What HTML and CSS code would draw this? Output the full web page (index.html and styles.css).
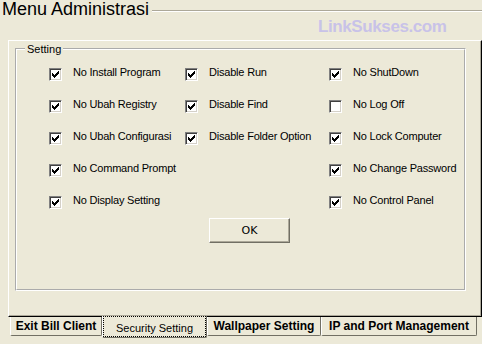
FILE: index.html
```html
<!DOCTYPE html>
<html lang="id">
<head>
    <meta charset="UTF-8">
    <title>Menu Administrasi</title>
    <link rel="stylesheet" href="styles.css">
</head>
<body>
    <header class="head">
        <div class="title-row">
            <h1 class="title">Menu Administrasi</h1>
            <div class="rule"></div>
        </div>
        <div class="brand">LinkSukses.com</div>
    </header>

    <div class="tabs">
        <div class="panel">
            <fieldset class="group">
                <legend>Setting</legend>
                <div class="cols">
                    <div class="col col-1">
                        <label class="check"><span class="box"><svg width="7" height="7" viewBox="0 0 7 7"><path d="M6 0h1v3h-1zM5 1h1v3h-1zM4 2h1v3h-1zM3 3h1v3h-1zM0 2h1v3h-1zM1 3h1v3h-1zM2 4h1v3h-1z"/></svg></span><span class="text">No Install Program</span></label>
                        <label class="check"><span class="box"><svg width="7" height="7" viewBox="0 0 7 7"><path d="M6 0h1v3h-1zM5 1h1v3h-1zM4 2h1v3h-1zM3 3h1v3h-1zM0 2h1v3h-1zM1 3h1v3h-1zM2 4h1v3h-1z"/></svg></span><span class="text">No Ubah Registry</span></label>
                        <label class="check"><span class="box"><svg width="7" height="7" viewBox="0 0 7 7"><path d="M6 0h1v3h-1zM5 1h1v3h-1zM4 2h1v3h-1zM3 3h1v3h-1zM0 2h1v3h-1zM1 3h1v3h-1zM2 4h1v3h-1z"/></svg></span><span class="text">No Ubah Configurasi</span></label>
                        <label class="check"><span class="box"><svg width="7" height="7" viewBox="0 0 7 7"><path d="M6 0h1v3h-1zM5 1h1v3h-1zM4 2h1v3h-1zM3 3h1v3h-1zM0 2h1v3h-1zM1 3h1v3h-1zM2 4h1v3h-1z"/></svg></span><span class="text">No Command Prompt</span></label>
                        <label class="check"><span class="box"><svg width="7" height="7" viewBox="0 0 7 7"><path d="M6 0h1v3h-1zM5 1h1v3h-1zM4 2h1v3h-1zM3 3h1v3h-1zM0 2h1v3h-1zM1 3h1v3h-1zM2 4h1v3h-1z"/></svg></span><span class="text">No Display Setting</span></label>
                    </div>
                    <div class="col col-2">
                        <label class="check"><span class="box"><svg width="7" height="7" viewBox="0 0 7 7"><path d="M6 0h1v3h-1zM5 1h1v3h-1zM4 2h1v3h-1zM3 3h1v3h-1zM0 2h1v3h-1zM1 3h1v3h-1zM2 4h1v3h-1z"/></svg></span><span class="text">Disable Run</span></label>
                        <label class="check"><span class="box"><svg width="7" height="7" viewBox="0 0 7 7"><path d="M6 0h1v3h-1zM5 1h1v3h-1zM4 2h1v3h-1zM3 3h1v3h-1zM0 2h1v3h-1zM1 3h1v3h-1zM2 4h1v3h-1z"/></svg></span><span class="text">Disable Find</span></label>
                        <label class="check"><span class="box"><svg width="7" height="7" viewBox="0 0 7 7"><path d="M6 0h1v3h-1zM5 1h1v3h-1zM4 2h1v3h-1zM3 3h1v3h-1zM0 2h1v3h-1zM1 3h1v3h-1zM2 4h1v3h-1z"/></svg></span><span class="text">Disable Folder Option</span></label>
                    </div>
                    <div class="col col-3">
                        <label class="check"><span class="box"><svg width="7" height="7" viewBox="0 0 7 7"><path d="M6 0h1v3h-1zM5 1h1v3h-1zM4 2h1v3h-1zM3 3h1v3h-1zM0 2h1v3h-1zM1 3h1v3h-1zM2 4h1v3h-1z"/></svg></span><span class="text">No ShutDown</span></label>
                        <label class="check"><span class="box"></span><span class="text">No Log Off</span></label>
                        <label class="check"><span class="box"><svg width="7" height="7" viewBox="0 0 7 7"><path d="M6 0h1v3h-1zM5 1h1v3h-1zM4 2h1v3h-1zM3 3h1v3h-1zM0 2h1v3h-1zM1 3h1v3h-1zM2 4h1v3h-1z"/></svg></span><span class="text">No Lock Computer</span></label>
                        <label class="check"><span class="box"><svg width="7" height="7" viewBox="0 0 7 7"><path d="M6 0h1v3h-1zM5 1h1v3h-1zM4 2h1v3h-1zM3 3h1v3h-1zM0 2h1v3h-1zM1 3h1v3h-1zM2 4h1v3h-1z"/></svg></span><span class="text">No Change Password</span></label>
                        <label class="check"><span class="box"><svg width="7" height="7" viewBox="0 0 7 7"><path d="M6 0h1v3h-1zM5 1h1v3h-1zM4 2h1v3h-1zM3 3h1v3h-1zM0 2h1v3h-1zM1 3h1v3h-1zM2 4h1v3h-1z"/></svg></span><span class="text">No Control Panel</span></label>
                    </div>
                </div>
                <button class="btn">OK</button>
            </fieldset>
        </div>
        <div class="tab-strip">
            <div class="tab tab-exit">Exit Bill Client</div>
            <div class="tab tab-active"><span class="focus">Security Setting</span></div>
            <div class="tab tab-wall">Wallpaper Setting</div>
            <div class="tab tab-ip">IP and Port Management</div>
        </div>
    </div>
</body>
</html>
```

FILE: styles.css
```css
body {
    margin: 0;
    width: 482px;
    height: 344px;
    overflow: hidden;
    background-color: #ece9d8;
    color: #000;
    font-family: "Liberation Sans", Arial, sans-serif;
    font-size: 11px;
}
.head {
    height: 40px;
}
.title-row {
    display: flex;
}
.title {
    margin: 0;
    padding-left: 2px;
    font-size: 18px;
    font-weight: normal;
    line-height: 18px;
}
.rule {
    flex: 1;
    align-self: flex-start;
    height: 0;
    margin: 10px 0 0 3px;
    border-top: 1px solid #aca899;
    border-bottom: 1px solid #fff;
}
.brand {
    padding-left: 318px;
    font-size: 17px;
    font-weight: bold;
    line-height: 17px;
    letter-spacing: -0.4px;
    color: #c8c2e8;
}
.tabs {
    margin-left: 8px;
    width: 474px;
}
.panel {
    height: 277px;
    box-sizing: border-box;
    padding: 1px 0 0 6px;
    border-top: 1px solid #fff;
    border-left: 1px solid #fff;
    border-right: 1px solid #000;
    border-bottom: 1px solid #000;
    box-shadow: inset -1px -1px 0 #aca899;
}
.group {
    width: 451px;
    height: 249px;
    box-sizing: border-box;
    margin: 0;
    padding: 0;
    border: 2px groove #fff;
}
.group legend {
    margin-left: 8px;
    padding: 0 2px;
    line-height: 14px;
}
.cols {
    display: flex;
    padding: 12px 0 0 32px;
}
.col {
    display: flex;
    flex-direction: column;
    gap: 19px;
}
.col-1 {
    width: 136px;
}
.col-2 {
    width: 144px;
}
.check {
    display: flex;
    align-items: flex-start;
    gap: 11px;
    height: 13px;
}
.box {
    width: 13px;
    height: 13px;
    box-sizing: border-box;
    flex: none;
    border: 1px solid;
    border-color: #808080 #fff #fff #808080;
    background-color: #fff;
    box-shadow: inset 1px 1px 0 #404040, inset -1px -1px 0 #d4d0c8;
}
.box svg {
    display: block;
    margin: 2px 0 0 2px;
    shape-rendering: crispEdges;
}
.text {
    margin-top: -2px;
    line-height: 13px;
    letter-spacing: -0.2px;
    white-space: nowrap;
}
.btn {
    display: block;
    width: 81px;
    height: 25px;
    margin: 9px 0 0 192px;
    padding: 0;
    border: 1px solid;
    border-color: #fff #716f64 #716f64 #fff;
    background-color: #ece9d8;
    box-shadow: inset -1px -1px 0 #aca899;
    font-family: "DejaVu Sans", sans-serif;
    font-size: 11px;
    color: #000;
}
.tab-strip {
    display: flex;
    padding-left: 2px;
}
.tab {
    height: 19px;
    box-sizing: border-box;
    padding-top: 2px;
    border-left: 1px solid #fff;
    border-right: 1px solid #716f64;
    border-bottom: 1px solid #716f64;
    border-bottom-left-radius: 2px;
    border-bottom-right-radius: 2px;
    font-size: 12px;
    font-weight: bold;
    line-height: 14px;
    text-align: center;
    white-space: nowrap;
}
.tab-exit {
    width: 92px;
}
.tab-active {
    width: 105px;
    height: 22px;
    margin-top: -1px;
    padding-top: 0;
    background-color: #ece9d8;
    font-size: 11px;
    font-weight: normal;
}
.focus {
    display: block;
    height: 21px;
    box-sizing: border-box;
    padding-top: 4px;
    border: 1px dotted #000;
}
.tab-wall {
    width: 114px;
}
.tab-ip {
    width: 156px;
}
```
